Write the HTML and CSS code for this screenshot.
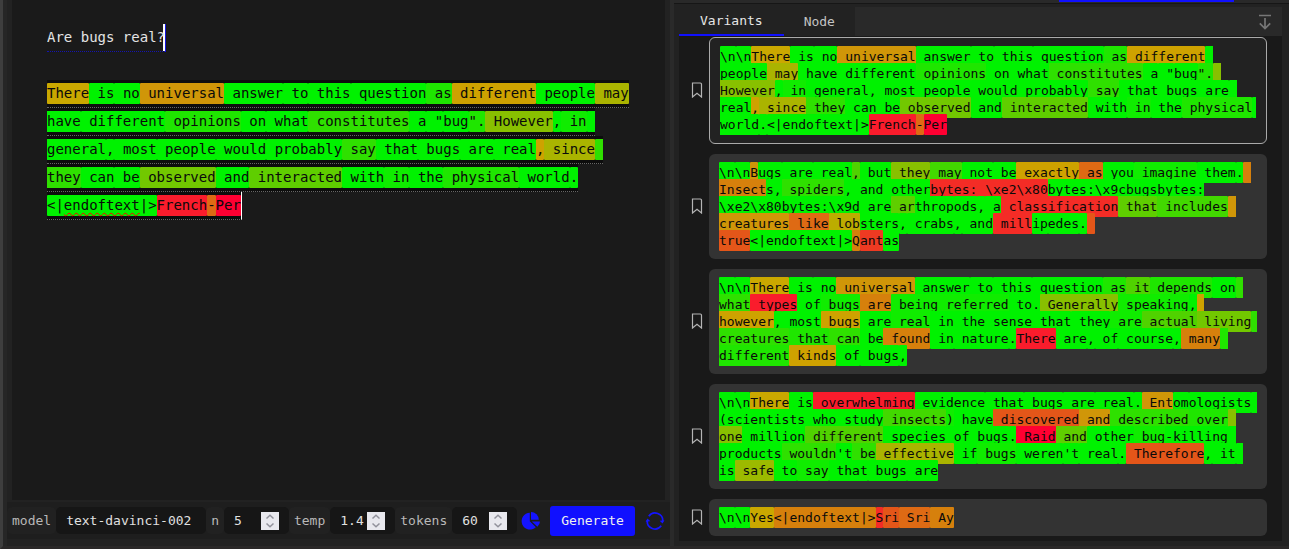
FILE: index.html
```html
<!DOCTYPE html>
<html lang="en">
<head>
<meta charset="utf-8">
<title>Text editor</title>
<link rel="stylesheet" href="styles.css">
</head>
<body>
<svg class="defs" aria-hidden="true">
  <symbol id="bookmark" viewBox="0 0 12 16"><path d="M1.5 1h7.8q1.2 0 1.2 1.2V15L6 11.2 1.5 15z" fill="none" stroke="#b4b4b4" stroke-width="1.2"/></symbol>
  <symbol id="spin" viewBox="0 0 18 18"><path d="M5.5 6.5L9 3.2l3.500 3.300M5.500 11.500L9 14.800l3.500-3.300" fill="none" stroke="#91919b" stroke-width="1.500"/></symbol>
</svg>
<div class="app">
  <main class="left">
    <div class="editor tokens" contenteditable="true" spellcheck="false"><span class="prompt">Are bugs real?</span>

<span class="reply"><span class="p12">There</span><span class="p0"> is</span><span class="p0"> no</span><span class="p14"> universal</span><span class="p0"> answer</span><span class="p0"> to</span><span class="p0"> this</span><span class="p0"> question</span><span class="p2"> as</span><span class="p13"> different</span><span class="p0"> people</span><span class="p10"> may</span><span class="p0"> have</span><span class="p0"> different</span><span class="p2"> opinions</span><span class="p0"> on</span><span class="p0"> what</span><span class="p3"> constitutes</span><span class="p0"> a</span><span class="p0"> "</span><span class="p0">bug</span><span class="p2">".</span><span class="p8"> However</span><span class="p0">,</span><span class="p1"> in</span><span class="p0"> general</span><span class="p0">,</span><span class="p0"> most</span><span class="p0"> people</span><span class="p0"> would</span><span class="p0"> probably</span><span class="p3"> say</span><span class="p0"> that</span><span class="p0"> bugs</span><span class="p0"> are</span><span class="p0"> real</span><span class="p13">,</span><span class="p10"> since</span><span class="p3"> they</span><span class="p0"> can</span><span class="p0"> be</span><span class="p7"> observed</span><span class="p0"> and</span><span class="p6"> interacted</span><span class="p0"> with</span><span class="p1"> in</span><span class="p0"> the</span><span class="p2"> physical</span><span class="p0"> world</span><span class="p0">.</span><wbr><span class="keep"><span class="p0">&lt;|<u>endoftext</u>|&gt;</span><span class="p20">French</span><span class="p16">-</span><span class="p21">Per</span></span></span></div>
    <form class="controls" onsubmit="return false">
      <label for="model">model</label>
      <input id="model" class="model" type="text" value="text-davinci-002">
      <label for="n">n</label>
      <span class="number"><input id="n" type="number" value="5"><svg><use href="#spin"/></svg></span>
      <label for="temp">temp</label>
      <span class="number"><input id="temp" type="number" step="0.1" value="1.4"><svg><use href="#spin"/></svg></span>
      <label for="tokens">tokens</label>
      <span class="number"><input id="tokens" type="number" value="60"><svg><use href="#spin"/></svg></span>
      <button class="icon" type="button" aria-label="Statistics"><svg width="20" height="20" viewBox="0 0 20 20" fill="#1414ff"><path d="M8.800 1.800A8.400 8.400 0 1 0 14.800 16.300L8.800 10.300z"/><path d="M10 1v7.800H17.800A7.900 7.900 0 0 0 10 1z"/><path d="M10.800 10.400h8.200a8 8 0 0 1-2.600 5.400z"/></svg></button>
      <button class="generate" type="submit">Generate</button>
      <button class="icon reload" type="button" aria-label="Reload"><svg width="20" height="20" viewBox="0 0 20 20" fill="none" stroke="#1414ff" stroke-width="1.700"><path d="M3.800 5.200A7.700 7.700 0 0 1 17.700 10.500M16.200 14.800A7.700 7.700 0 0 1 2.300 9.500"/><path d="M14.600 9.800l3 2.800 1.800-3.400zM5.400 10.200l-3-2.800L.6 10.800z" fill="#1414ff" stroke="none"/></svg></button>
    </form>
  </main>
  <div class="splitter"></div>
  <section class="right">
    <div class="upper"><span></span></div>
    <nav class="tabs">
      <button class="tab active" type="button">Variants</button>
      <button class="tab" type="button">Node</button>
      <button class="collapse" type="button" aria-label="Collapse"><svg width="14" height="16" viewBox="0 0 14 16" fill="none" stroke="#777" stroke-width="1.700"><path d="M1 1.500h12M7 4v11M1.800 9.400L7 14.600l5.200-5.200"/></svg></button>
    </nav>
    <div class="list">
      <article class="row"><button class="mark" type="button" aria-label="Bookmark"><svg><use href="#bookmark"/></svg></button>
        <div class="card selected tokens"><span class="p0">\n</span><span class="p0">\n</span><span class="p12">There</span><span class="p0"> is</span><span class="p0"> no</span><span class="p14"> universal</span><span class="p0"> answer</span><span class="p0"> to</span><span class="p0"> this</span><span class="p0"> question</span><span class="p2"> as</span><span class="p13"> different</span><span class="p0"> people</span><span class="p10"> may</span><span class="p0"> have</span><span class="p0"> different</span><span class="p2"> opinions</span><span class="p0"> on</span><span class="p0"> what</span><span class="p3"> constitutes</span><span class="p0"> a</span><span class="p0"> "</span><span class="p0">bug</span><span class="p2">".</span><span class="p8"> However</span><span class="p0">,</span><span class="p1"> in</span><span class="p0"> general</span><span class="p0">,</span><span class="p0"> most</span><span class="p0"> people</span><span class="p0"> would</span><span class="p0"> probably</span><span class="p3"> say</span><span class="p0"> that</span><span class="p0"> bugs</span><span class="p0"> are</span><span class="p0"> real</span><span class="p13">,</span><span class="p10"> since</span><span class="p3"> they</span><span class="p0"> can</span><span class="p0"> be</span><span class="p7"> observed</span><span class="p0"> and</span><span class="p6"> interacted</span><span class="p0"> with</span><span class="p1"> in</span><span class="p0"> the</span><span class="p2"> physical</span><span class="p0"> world</span><span class="p0">.</span><span class="p0">&lt;|endoftext|&gt;</span><span class="p20">French</span><span class="p16">-</span><span class="p21">Per</span></div></article>
      <article class="row"><button class="mark" type="button" aria-label="Bookmark"><svg><use href="#bookmark"/></svg></button>
        <div class="card tokens"><span class="p0">\n</span><span class="p0">\n</span><span class="p14">B</span><span class="p0">ugs</span><span class="p0"> are</span><span class="p0"> real</span><span class="p5">,</span><span class="p0"> but</span><span class="p8"> they</span><span class="p4"> may</span><span class="p0"> not</span><span class="p0"> be</span><span class="p13"> exactly</span><span class="p16"> as</span><span class="p0"> you</span><span class="p1"> imagine</span><span class="p0"> them</span><span class="p0">.</span><span class="p15"> Insect</span><span class="p0">s</span><span class="p0">,</span><span class="p3"> spiders</span><span class="p0">,</span><span class="p0"> and</span><span class="p0"> other</span><span class="p19">bytes: \xe2\x80</span><span class="p0">bytes:\x9c</span><span class="p0">bugs</span><span class="p0">bytes:<br>\xe2\x80</span><span class="p0">bytes:\x9d</span><span class="p0"> are</span><span class="p6"> ar</span><span class="p0">throp</span><span class="p0">ods</span><span class="p0">,</span><span class="p0"> a</span><span class="p19"> classification</span><span class="p6"> that</span><span class="p4"> includes</span><span class="p14"> creatures</span><span class="p16"> like</span><span class="p11"> lob</span><span class="p0">sters</span><span class="p0">,</span><span class="p0"> crabs</span><span class="p0">,</span><span class="p0"> and</span><span class="p19"> mill</span><span class="p0">ip</span><span class="p0">edes</span><span class="p0">.</span><span class="p17"> </span><span class="keep"><span class="p17">true</span><span class="p0">&lt;|endoftext|&gt;</span><span class="p15">Q</span><span class="p18">ant</span><span class="p0">as</span></span></div></article>
      <article class="row"><button class="mark" type="button" aria-label="Bookmark"><svg><use href="#bookmark"/></svg></button>
        <div class="card tokens"><span class="p0">\n</span><span class="p0">\n</span><span class="p12">There</span><span class="p0"> is</span><span class="p0"> no</span><span class="p14"> universal</span><span class="p0"> answer</span><span class="p0"> to</span><span class="p0"> this</span><span class="p0"> question</span><span class="p2"> as</span><span class="p5"> it</span><span class="p2"> depends</span><span class="p0"> on</span><span class="p3"> what</span><span class="p20"> types</span><span class="p0"> of</span><span class="p1"> bugs</span><span class="p15"> are</span><span class="p1"> being</span><span class="p1"> referred</span><span class="p0"> to</span><span class="p0">.</span><span class="p8"> Generally</span><span class="p1"> speaking</span><span class="p0">,</span><span class="p13"> however</span><span class="p0">,</span><span class="p0"> most</span><span class="p13"> bugs</span><span class="p0"> are</span><span class="p1"> real</span><span class="p0"> in</span><span class="p0"> the</span><span class="p0"> sense</span><span class="p0"> that</span><span class="p0"> they</span><span class="p1"> are</span><span class="p5"> actual</span><span class="p7"> living</span><span class="p3"> creatures</span><span class="p2"> that</span><span class="p3"> can</span><span class="p0"> be</span><span class="p15"> found</span><span class="p0"> in</span><span class="p0"> nature</span><span class="p0">.</span><span class="p20">There</span><span class="p0"> are</span><span class="p0">,</span><span class="p0"> of</span><span class="p0"> course</span><span class="p0">,</span><span class="p15"> many</span><span class="p2"> different</span><span class="p13"> kinds</span><span class="p0"> of</span><span class="p0"> bugs</span><span class="p0">,</span></div></article>
      <article class="row"><button class="mark" type="button" aria-label="Bookmark"><svg><use href="#bookmark"/></svg></button>
        <div class="card tokens"><span class="p0">\n</span><span class="p0">\n</span><span class="p12">There</span><span class="p0"> is</span><span class="p20"> overwhelming</span><span class="p0"> evidence</span><span class="p0"> that</span><span class="p0"> bugs</span><span class="p0"> are</span><span class="p0"> real</span><span class="p0">.</span><span class="p14"> Ent</span><span class="p0">om</span><span class="p0">ologists</span><span class="p0"> (</span><span class="p0">scientists</span><span class="p0"> who</span><span class="p0"> study</span><span class="p4"> insects</span><span class="p1">)</span><span class="p0"> have</span><span class="p17"> discovered</span><span class="p14"> and</span><span class="p3"> described</span><span class="p2"> over</span><span class="p8"> one</span><span class="p0"> million</span><span class="p5"> different</span><span class="p0"> species</span><span class="p0"> of</span><span class="p0"> bugs</span><span class="p0">.</span><span class="p21"> Raid</span><span class="p6"> and</span><span class="p0"> other</span><span class="p1"> bug</span><span class="p0">-</span><span class="p0">killing</span><span class="p0"> products</span><span class="p3"> wouldn</span><span class="p0">'t</span><span class="p3"> be</span><span class="p10"> effective</span><span class="p0"> if</span><span class="p1"> bugs</span><span class="p0"> weren</span><span class="p0">'t</span><span class="p0"> real</span><span class="p0">.</span><span class="p17"> Therefore</span><span class="p0">,</span><span class="p0"> it</span><span class="p0"> is</span><span class="p9"> safe</span><span class="p0"> to</span><span class="p1"> say</span><span class="p0"> that</span><span class="p0"> bugs</span><span class="p0"> are</span></div></article>
      <article class="row"><button class="mark" type="button" aria-label="Bookmark"><svg><use href="#bookmark"/></svg></button>
        <div class="card tokens"><span class="p0">\n</span><span class="p0">\n</span><span class="p12">Yes</span><span class="p15">&lt;|endoftext|&gt;</span><span class="p19">S</span><span class="p17">ri</span><span class="p16"> Sri</span><span class="p15"> Ay</span></div></article>
    </div>
  </section>
</div>
</body>
</html>
```
FILE: styles.css
```css
* { box-sizing: border-box; }
body {
  margin: 0;
  background: #222;
  color: #e0e0e0;
  font: 13px/17px "DejaVu Sans Mono", monospace;
}
button, input { font: inherit; color: inherit; border: 0; margin: 0; padding: 0; background: none; }
.defs { position: absolute; width: 0; height: 0; }

.app {
  display: grid;
  grid-template-columns: minmax(0, 667fr) 4px minmax(0, 615fr);
  height: 100vh;
  overflow: hidden;
  border-left: 3px solid #3e3e3e;
  border-bottom: 3px solid #2a2828;
}
.left { display: flex; flex-direction: column; border-left: 4px solid #262626; padding-bottom: 7px; min-height: 0; }
.splitter { background: #2a2a2a; }

/* Editor */
.editor {
  flex: 1;
  min-height: 0;
  margin: 0 5px 2px;
  padding: 23px 0 0;
  border: solid transparent;
  border-width: 0 36px 0 35px;
  background: #1a1a1a;
  font-size: 14px;
  line-height: 28px;
  outline: 0;
}
/* Spaces that hang past a wrapped line are cut at the text edge */
.tokens { white-space: pre-wrap; color: #0a0a0a; overflow-x: clip; }
.editor .prompt {
  color: #e4e4e4;
  padding: 5px 0 6px;
  border-bottom: 1px dotted #1414b0;
  box-shadow: inset -2px 0 #fff, 1px 0 #1414e0;
}
.editor .reply { background: #0d0d0d; padding: 5px 0 6px; border-bottom: 1px dotted #666; border-right: 1px solid #fff; }
.keep { white-space: nowrap; }
.tokens u { text-decoration: underline wavy #ff0000 1px; text-underline-offset: 2px; text-decoration-skip-ink: none; }

/* Token shading, likely to unlikely */
.tokens [class^="p"]:not(.prompt) { border-radius: 1px; padding: 3px 0; }
.editor [class^="p"]:not(.prompt) { padding: 2px 0 3px; }
.p0 { background: #00f200; }
.p1 { background: #10ec00; }
.p2 { background: #1fe600; }
.p3 { background: #2fe000; }
.p4 { background: #42d800; }
.p5 { background: #50d200; }
.p6 { background: #5fce00; }
.p7 { background: #72c800; }
.p8 { background: #88c000; }
.p9 { background: #9cba00; }
.p10 { background: #aab400; }
.p11 { background: #bcac00; }
.p12 { background: #caa800; }
.p13 { background: #cea200; }
.p14 { background: #d09608; }
.p15 { background: #d6800c; }
.p16 { background: #de6a14; }
.p17 { background: #e45619; }
.p18 { background: #ee3a22; }
.p19 { background: #f42c26; }
.p20 { background: #fa1c2c; }
.p21 { background: #ff0032; }

/* Generation settings */
.controls { display: flex; align-items: center; height: 37px; background: #1e1e1e; }
.controls label { padding: 5px; height: 27px; border-radius: 5px; background: #212121; color: #b8b8b8; }
.controls input { height: 27px; border-radius: 5px; background: #161616; padding: 0 10px; outline: 0; }
.model { flex: 0 1 150px; min-width: 0; }
.number { position: relative; flex: 0 1 65px; min-width: 0; }
.number input { width: 100%; appearance: textfield; }
.number input::-webkit-inner-spin-button { appearance: none; }
.number svg { position: absolute; right: 10px; top: 5px; width: 18px; height: 18px; background: #e8e8ee; }
.icon { display: flex; margin-left: 4px; }
.generate { height: 30px; padding: 0 11px; margin: 0 6px 0 9px; background: #1010ff; border-radius: 3px; color: #f0f0f0; }

/* Variants */
.right { display: flex; flex-direction: column; min-width: 0; min-height: 0; padding: 0 7px 5px 5px; }
.upper { flex: none; height: 4px; margin: 0 -7px 3px -5px; background: #292929; border-bottom: 1px solid #161616; padding: 0 55px 0 385px; }
.upper span { display: block; height: 2px; background: #1010ff; }
.tabs { flex: none; display: flex; height: 29px; background: #292929; }
.tab { padding: 0 20px; background: #222; color: #c4c4c4; }
.tab.active { color: #e6e6e6; border-bottom: 2px solid #1010ff; padding: 0 21px; }
.collapse { margin-left: auto; padding: 0 10px; display: flex; align-items: center; }
.list { flex: 1; min-height: 0; overflow: hidden; background: #191919; padding: 1px 15px 5px 0; display: flex; flex-direction: column; gap: 10px; }
.row { flex: none; display: grid; grid-template-columns: 30px minmax(0, 1fr); }
.mark { display: flex; align-items: center; justify-content: center; padding: 0 0 1px 5px; }
.mark svg { width: 12px; height: 16px; }
.card { background: #333; border-radius: 6px; border: solid transparent; border-width: 0 10px; padding: 10px 0; }
.card.selected { background: #222; border-width: 0 11px; padding: 11px 0; outline: 1px solid #aaa; outline-offset: -1px; }
```
